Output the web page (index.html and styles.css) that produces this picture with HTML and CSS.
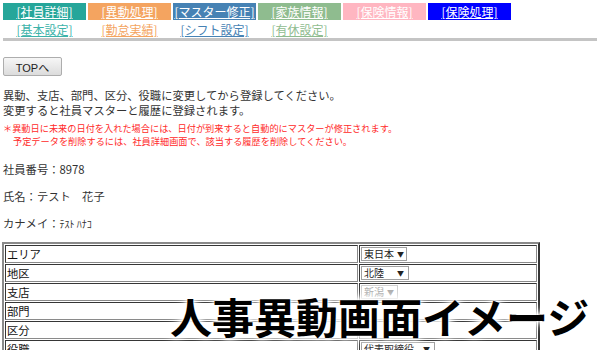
FILE: index.html
```html
<!DOCTYPE html>
<html lang="ja">
<head>
    <meta charset="UTF-8">
    <title>人事異動</title>
    <link rel="stylesheet" href="styles.css">
</head>
<body>
    <div id="menu">
        <div class="tabs">
            <a class="tab tab-teal" href="#">[社員詳細]</a>
            <a class="tab tab-orange" href="#">[異動処理]</a>
            <a class="tab tab-steel" href="#">[マスター修正]</a>
            <a class="tab tab-green" href="#">[家族情報]</a>
            <a class="tab tab-pink" href="#">[保険情報]</a>
            <a class="tab tab-blue" href="#">[保険処理]</a>
        </div>
        <div class="tabs sub">
            <a class="sub-tab c-teal" href="#">[基本設定]</a>
            <a class="sub-tab c-orange" href="#">[勤怠実績]</a>
            <a class="sub-tab c-steel" href="#">[シフト設定]</a>
            <a class="sub-tab c-green" href="#">[有休設定]</a>
        </div>
        <div class="menu-line"></div>
    </div>

    <button class="top-button">TOPへ</button>

    <div class="notes">
        <p>異動、支店、部門、区分、役職に変更してから登録してください。</p>
        <p>変更すると社員マスターと履歴に登録されます。</p>
        <p class="warn first">＊異動日に未来の日付を入れた場合には、日付が到来すると自動的にマスターが修正されます。</p>
        <p class="warn indent">予定データを削除するには、社員詳細画面で、該当する履歴を削除してください。</p>
    </div>

    <p class="info">社員番号：8978</p>
    <p class="info">氏名：テスト　花子</p>
    <p class="info">カナメイ：<span class="kana">ﾃｽﾄ ﾊﾅｺ</span></p>

    <table class="edit-table">
        <tr>
            <td class="label">エリア</td>
            <td><span class="select w-area"><span>東日本</span><span class="arrow">▼</span></span></td>
        </tr>
        <tr>
            <td class="label">地区</td>
            <td><span class="select w-district"><span>北陸</span><span class="arrow">▼</span></span></td>
        </tr>
        <tr>
            <td class="label">支店</td>
            <td><span class="select disabled w-branch"><span>新潟</span><span class="arrow">▼</span></span></td>
        </tr>
        <tr>
            <td class="label">部門</td>
            <td></td>
        </tr>
        <tr>
            <td class="label">区分</td>
            <td></td>
        </tr>
        <tr>
            <td class="label">役職</td>
            <td><span class="select w-post"><span>代表取締役</span><span class="arrow">▼</span></span></td>
        </tr>
    </table>

    <div class="caption">人事異動画面イメージ</div>
</body>
</html>
```

FILE: styles.css
```css
/* 全体 */
body {
    margin: 0;
    padding: 3px 3px 0 3px;
    font-family: "Noto Sans CJK JP", sans-serif;
    font-size: 11.3px;
    color: #333;
    background-color: #fff;
    position: relative;
    height: 350px;
    overflow: hidden;
}

p {
    margin: 0;
}

/* メニュー */
.tabs {
    display: flex;
    gap: 2px;
}

.tab {
    width: 83px;
    height: 17px;
    line-height: 17px;
    text-align: center;
    font-size: 12px;
    color: #fff;
    text-decoration: underline;
}

.tab-teal { background-color: #26a69a; }
.tab-orange { background-color: #f4a460; }
.tab-steel { background-color: #4682b4; }
.tab-green { background-color: #8fbc8f; }
.tab-pink { background-color: #ffb6c1; }
.tab-blue { background-color: #0000ff; }

.sub {
    margin-top: 2px;
}

.sub-tab {
    width: 83px;
    height: 16px;
    line-height: 16px;
    text-align: center;
    font-size: 12px;
    text-decoration: underline;
}

.c-teal { color: #3cb3aa; }
.c-orange { color: #f4a460; }
.c-steel { color: #4682b4; }
.c-green { color: #8fbc8f; }

.menu-line {
    height: 3px;
    width: 594px;
    background-color: #c4c4c4;
}

/* ボタン */
.top-button {
    display: block;
    margin-top: 16px;
    width: 59px;
    height: 19px;
    padding: 0;
    font-family: "Liberation Sans", "Noto Sans CJK JP", sans-serif;
    font-size: 11px;
    color: #222;
    background: linear-gradient(#f6f6f6, #dcdcdc);
    border: 1px solid #adadad;
    border-radius: 2px;
}

/* 説明文 */
.notes {
    margin-top: 12px;
    line-height: 15px;
}

.warn {
    color: #ff2a2a;
    font-size: 9.2px;
    line-height: 13px;
}

.warn.first {
    margin-top: 4px;
}

.indent {
    padding-left: 10px;
}

.info {
    margin-top: 12px;
    line-height: 15px;
}

.notes + .info {
    margin-top: 14px;
}

.kana {
    font-size: 10px;
}

/* 入力テーブル */
.edit-table {
    margin-top: 11px;
    margin-left: -1px;
    width: 538px;
    border: 2px outset #8a8a8a;
    border-spacing: 1px;
    font-size: 11.3px;
    color: #111;
}

.edit-table td {
    border: 1px inset #8a8a8a;
    height: 16px;
    padding: 0 1px;
    line-height: 16px;
    vertical-align: middle;
}

.edit-table .label {
    width: 349px;
}

.select {
    display: inline-flex;
    justify-content: space-between;
    align-items: center;
    gap: 3px;
    box-sizing: border-box;
    height: 14px;
    line-height: 12px;
    font-size: 10px;
    white-space: nowrap;
    color: #222;
    border: 1px solid #a0a0a0;
    padding: 0 4px 0 2px;
    vertical-align: top;
    margin-top: 1px;
}

.select .arrow {
    font-size: 7px;
}

.select.disabled {
    color: #aaa;
    border-color: #d0d0d0;
}

.w-area { width: 46px; }
.w-district { width: 48px; }
.w-branch { width: 37px; }
.w-post { width: 74px; }

/* 画像キャプション */
.caption {
    position: absolute;
    left: 170px;
    top: 288px;
    font-size: 42px;
    font-weight: 700;
    line-height: 56px;
    color: #000;
    white-space: nowrap;
    text-shadow: 0 0 3px #fff, 0 0 6px #fff, 0 0 10px #fff, 0 0 14px #fff;
}
```
